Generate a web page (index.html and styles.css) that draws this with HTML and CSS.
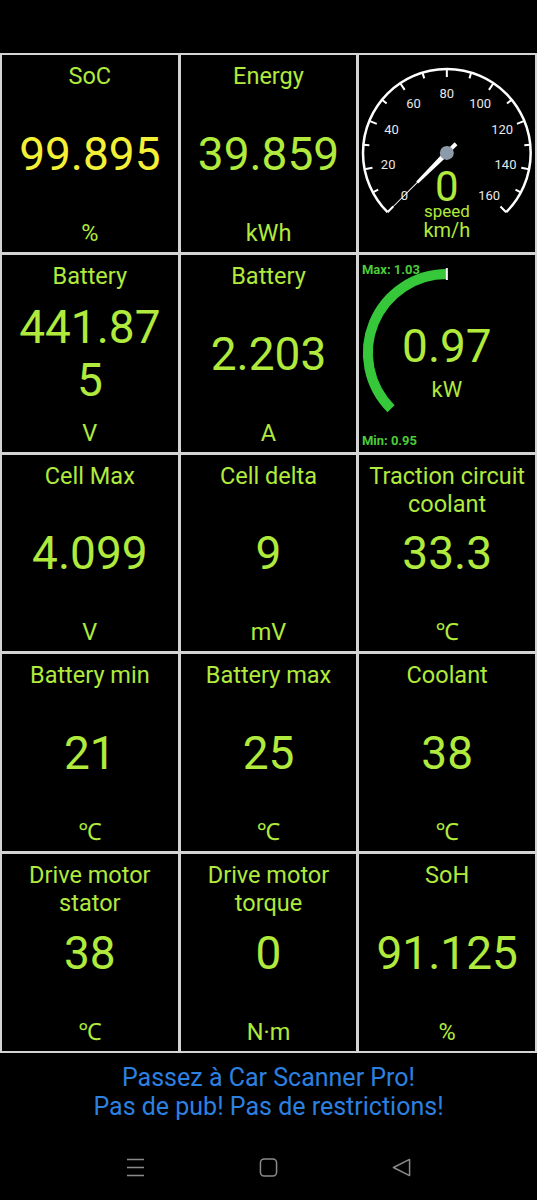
FILE: index.html
```html
<!DOCTYPE html>
<html lang="fr">
<head>
<meta charset="utf-8">
<title>Car Scanner</title>
<link rel="stylesheet" href="styles.css">
</head>
<body>
<div class="status"></div>
<main class="grid">
  <div class="cell"><div class="title">SoC</div><div class="value yellow">99.895</div><div class="unit">%</div></div>
  <div class="cell"><div class="title">Energy</div><div class="value">39.859</div><div class="unit">kWh</div></div>
  <div class="cell gauge">
    <svg viewBox="0 0 176 197" class="dial">
      <path class="rim" d="M28.6 157.4 A84 84 0 1 1 147.4 157.4"/>
      <g class="ticks">
        <line x1="88" y1="14" x2="88" y2="22" transform="rotate(-135 88 98)"/>
        <line x1="88" y1="14" x2="88" y2="20" transform="rotate(-118.125 88 98)"/>
        <line x1="88" y1="14" x2="88" y2="22" transform="rotate(-101.25 88 98)"/>
        <line x1="88" y1="14" x2="88" y2="20" transform="rotate(-84.375 88 98)"/>
        <line x1="88" y1="14" x2="88" y2="22" transform="rotate(-67.5 88 98)"/>
        <line x1="88" y1="14" x2="88" y2="20" transform="rotate(-50.625 88 98)"/>
        <line x1="88" y1="14" x2="88" y2="22" transform="rotate(-33.75 88 98)"/>
        <line x1="88" y1="14" x2="88" y2="20" transform="rotate(-16.875 88 98)"/>
        <line x1="88" y1="14" x2="88" y2="22"/>
        <line x1="88" y1="14" x2="88" y2="20" transform="rotate(16.875 88 98)"/>
        <line x1="88" y1="14" x2="88" y2="22" transform="rotate(33.75 88 98)"/>
        <line x1="88" y1="14" x2="88" y2="20" transform="rotate(50.625 88 98)"/>
        <line x1="88" y1="14" x2="88" y2="22" transform="rotate(67.5 88 98)"/>
        <line x1="88" y1="14" x2="88" y2="20" transform="rotate(84.375 88 98)"/>
        <line x1="88" y1="14" x2="88" y2="22" transform="rotate(101.25 88 98)"/>
        <line x1="88" y1="14" x2="88" y2="20" transform="rotate(118.125 88 98)"/>
        <line x1="88" y1="14" x2="88" y2="22" transform="rotate(135 88 98)"/>
      </g>
      <g class="labels">
        <text x="45.6" y="140.4">0</text>
        <text x="29.2" y="109.7">20</text>
        <text x="32.6" y="75">40</text>
        <text x="54.7" y="48.1">60</text>
        <text x="88" y="38">80</text>
        <text x="121.3" y="48.1">100</text>
        <text x="143.4" y="75">120</text>
        <text x="146.8" y="109.7">140</text>
        <text x="130.4" y="140.4">160</text>
      </g>
      <text class="big" x="88" y="146">0</text>
      <text class="cap" x="88" y="162">speed</text>
      <text class="capunit" x="88" y="182">km/h</text>
      <g class="needle" transform="rotate(-135 88 98)">
        <rect x="86" y="98" width="4" height="13"/>
        <polygon points="85.4,98 90.6,98 89.4,56 86.6,56"/>
        <line x1="88" y1="57" x2="88" y2="21"/>
      </g>
      <circle class="hub" cx="88" cy="98" r="7"/>
    </svg>
  </div>

  <div class="cell"><div class="title">Battery</div><div class="value">441.87<br>5</div><div class="unit">V</div></div>
  <div class="cell"><div class="title">Battery</div><div class="value">2.203</div><div class="unit">A</div></div>
  <div class="cell gauge">
    <svg viewBox="0 0 176 197" class="power">
      <path class="bar" d="M32.1 153.9 A79 79 0 0 1 88 19"/>
      <line class="marker" x1="88" y1="13" x2="88" y2="25"/>
      <text class="minmax" x="3" y="19">Max: 1.03</text>
      <text class="minmax" x="3" y="190">Min: 0.95</text>
      <text class="pval" x="88" y="107">0.97</text>
      <text class="punit" x="88" y="142">kW</text>
    </svg>
  </div>

  <div class="cell"><div class="title">Cell Max</div><div class="value">4.099</div><div class="unit">V</div></div>
  <div class="cell"><div class="title">Cell delta</div><div class="value">9</div><div class="unit">mV</div></div>
  <div class="cell"><div class="title">Traction circuit coolant</div><div class="value">33.3</div><div class="unit">℃</div></div>

  <div class="cell"><div class="title">Battery min</div><div class="value">21</div><div class="unit">℃</div></div>
  <div class="cell"><div class="title">Battery max</div><div class="value">25</div><div class="unit">℃</div></div>
  <div class="cell"><div class="title">Coolant</div><div class="value">38</div><div class="unit">℃</div></div>

  <div class="cell"><div class="title">Drive motor stator</div><div class="value">38</div><div class="unit">℃</div></div>
  <div class="cell"><div class="title">Drive motor torque</div><div class="value">0</div><div class="unit">N·m</div></div>
  <div class="cell"><div class="title">SoH</div><div class="value">91.125</div><div class="unit">%</div></div>
</main>

<div class="ad">
  <div>Passez à Car Scanner Pro!</div>
  <div>Pas de pub! Pas de restrictions!</div>
</div>

<nav class="nav">
  <svg class="navicon" viewBox="0 0 20 20"><path d="M1 1.5h18M1 10h18M1 18.5h18"/></svg>
  <svg class="navicon" viewBox="0 0 20 20"><rect x="1.5" y="1" width="17" height="18" rx="4"/></svg>
  <svg class="navicon" viewBox="0 0 20 20"><path d="M18.5 1.5 L1.5 10 L18.5 18.5 Z"/></svg>
</nav>
</body>
</html>
```
FILE: styles.css
```css
* { box-sizing: border-box; }

html, body {
  margin: 0;
  background: #000;
}

body {
  width: 537px;
  height: 1200px;
  overflow: hidden;
  font-family: Roboto, "Noto Sans", "DejaVu Sans", sans-serif;
}

.status {
  height: 53px;
}

.grid {
  display: grid;
  grid-template-columns: repeat(3, 1fr);
  grid-template-rows: repeat(5, 1fr);
  gap: 3px;
  padding: 2px;
  height: 1000px;
  background: #d4d4d4;
}

.cell {
  background: #000;
  display: grid;
  grid-template-rows: 1fr auto 1fr;
  padding: 7px 3px 5px;
  text-align: center;
  color: #b0ea3c;
  min-width: 0;
  min-height: 0;
}

.title,
.unit {
  font-size: 23.5px;
  line-height: 28px;
}

.title { align-self: start; }
.unit { align-self: end; }

.value {
  font-size: 46px;
  line-height: 53px;
}

.value.yellow { color: #f3f036; }

.gauge {
  display: block;
  padding: 0;
}

.gauge svg {
  display: block;
  width: 100%;
  height: 100%;
}

.dial .rim {
  fill: none;
  stroke: #fff;
  stroke-width: 2.5;
}

.dial .ticks line {
  stroke: #fff;
  stroke-width: 2;
}

.dial .labels text {
  fill: #e8e8e8;
  font-size: 13px;
  text-anchor: middle;
  dominant-baseline: central;
}

.dial .big {
  fill: #b0ea3c;
  font-size: 42px;
  text-anchor: middle;
}

.dial .cap {
  fill: #b0ea3c;
  font-size: 17px;
  text-anchor: middle;
}

.dial .capunit {
  fill: #b0ea3c;
  font-size: 20px;
  text-anchor: middle;
}

.needle rect,
.needle polygon { fill: #fff; }

.needle line {
  stroke: #fff;
  stroke-width: 1;
}

.hub { fill: #8d9aaa; }

.power .bar {
  fill: none;
  stroke: #36c83a;
  stroke-width: 10;
}

.power .marker {
  stroke: #fff;
  stroke-width: 2;
}

.power .minmax {
  fill: #4ccc38;
  font-size: 13px;
  font-weight: bold;
}

.power .pval {
  fill: #b0ea3c;
  font-size: 46px;
  text-anchor: middle;
}

.power .punit {
  fill: #b0ea3c;
  font-size: 22px;
  text-anchor: middle;
}

.ad {
  height: 82px;
  padding-top: 10px;
  text-align: center;
  color: #2c80e0;
  font-size: 25px;
  line-height: 29px;
}

.nav {
  height: 65px;
  display: flex;
  justify-content: center;
  align-items: center;
  gap: 114px;
}

.navicon {
  width: 19px;
  height: 19px;
  fill: none;
  stroke: #8a8a8a;
  stroke-width: 1.6;
  stroke-linejoin: round;
}
```
